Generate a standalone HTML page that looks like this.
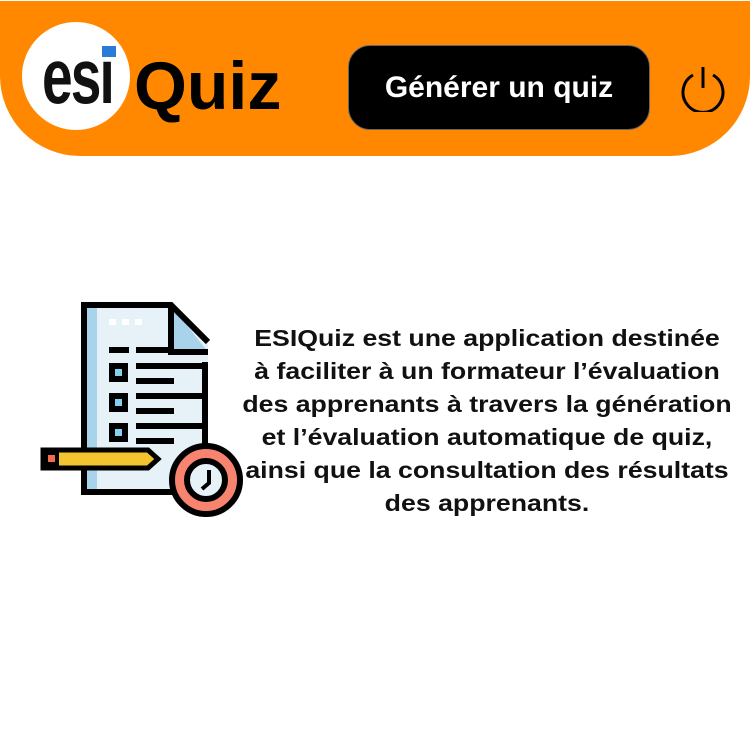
<!DOCTYPE html>
<html><head><meta charset="utf-8"><style>
body{margin:0;width:750px;height:746px;background:#fff;position:relative;overflow:hidden;font-family:"Liberation Sans",sans-serif}
.hdr{position:absolute;left:0;top:1px;width:750px;height:155px;background:#ff8800;border-radius:0 0 80px 80px}
.logo{position:absolute;left:22px;top:22px;width:108px;height:108px;border-radius:50%;background:#fff}
.esi{position:absolute;left:42px;top:38px;font:bold 58px/1 "Liberation Sans Narrow","Liberation Sans",sans-serif;letter-spacing:-2px;color:#111;transform:scale(0.95,1.35);transform-origin:left top}
.quiz{position:absolute;left:134px;top:52px;font:bold 68px/1 "Liberation Sans",sans-serif;color:#000}
.btn{position:absolute;left:348px;top:45px;width:302px;height:85px;background:#000;border:1px solid #666;border-radius:22px;box-sizing:border-box;color:#fff;font:bold 30px/83px "Liberation Sans",sans-serif;text-align:center}
.txt{position:absolute;left:487px;top:322px;width:440px;margin-left:-220px;text-align:center;font:bold 23px/33px "Liberation Sans",sans-serif;color:#111;transform:scaleX(1.16);transform-origin:center top;white-space:nowrap}
</style></head><body>
<div class="hdr"></div>
<div class="logo"></div>
<div class="esi">esi</div>
<div style="position:absolute;left:102px;top:46px;width:14px;height:11px;background:#2a7bd8"></div>
<div class="quiz">Quiz</div>
<div class="btn">Générer un quiz</div>
<svg style="position:absolute;left:680px;top:64px" width="46" height="48" viewBox="0 0 46 48"><path d="M13 11 A20 20 0 1 0 33 11" fill="none" stroke="#000" stroke-width="3"/><path d="M23 3 V24" stroke="#000" stroke-width="3"/></svg>
<svg style="position:absolute;left:40px;top:302px" width="206" height="218" viewBox="0 0 206 218">
<path d="M44 3 H131 L168 40 V190 H44 Z" fill="#e6f1f8"/>
<rect x="47" y="6" width="10" height="182" fill="#a9d3ea"/>
<path d="M131 3 V50 H168 Z" fill="#a9d3ea"/>
<path d="M165 60 V160 M165 184 V190 H44 V3 H131 L168 40 M131 3 V50 H168" fill="none" stroke="#000" stroke-width="6"/>
<g fill="#fff"><rect x="69" y="17" width="7" height="6"/><rect x="82" y="17" width="7" height="6"/><rect x="95" y="17" width="7" height="6"/></g>
<g fill="#000"><rect x="69" y="45" width="20" height="6"/><rect x="96" y="45" width="38" height="6"/>
<rect x="96" y="61" width="68" height="6"/><rect x="96" y="76" width="38" height="6"/>
<rect x="96" y="91" width="68" height="6"/><rect x="96" y="106" width="38" height="6"/>
<rect x="96" y="121" width="68" height="6"/><rect x="96" y="136" width="38" height="6"/></g>
<g fill="#86d2ee" stroke="#000" stroke-width="6"><rect x="72" y="64" width="13" height="13"/><rect x="72" y="94" width="13" height="13"/><rect x="72" y="124" width="13" height="13"/></g>
<path d="M3 148 H108 L118 157 L108 166 H3 Z" fill="#f4c430" stroke="#000" stroke-width="5"/>
<rect x="5" y="150" width="14" height="14" fill="#000"/><rect x="8" y="153" width="7" height="7" fill="#f26c50"/>
<circle cx="166" cy="178" r="34" fill="#f88470" stroke="#000" stroke-width="6"/>
<circle cx="166" cy="178" r="19" fill="#e6f1f8" stroke="#000" stroke-width="6"/>
<path d="M169 168 V181 L162 187" fill="none" stroke="#000" stroke-width="4"/>
</svg>
<div class="txt">ESIQuiz est une application destinée<br>à faciliter à un formateur l’évaluation<br>des apprenants à travers la génération<br>et l’évaluation automatique de quiz,<br>ainsi que la consultation des résultats<br>des apprenants.</div>
</body></html>
